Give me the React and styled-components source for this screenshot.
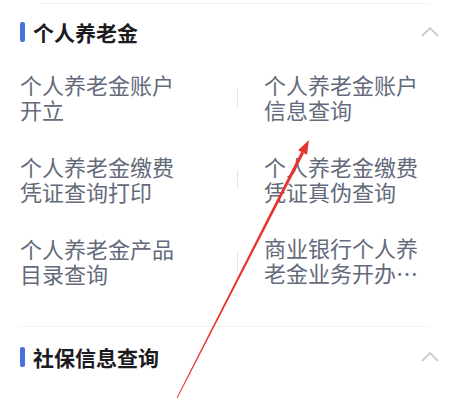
import styled, { createGlobalStyle, css } from "styled-components";

const GlobalStyle = createGlobalStyle`
  body {
    margin: 0;
    background: #ffffff;
    font-family: "Noto Sans CJK SC", "Noto Sans", sans-serif;
  }
`;

const sections = [
  {
    title: "个人养老金",
    items: [
      ["个人养老金账户开立", "个人养老金账户信息查询"],
      ["个人养老金缴费凭证查询打印", "个人养老金缴费凭证真伪查询"],
      ["个人养老金产品目录查询", "商业银行个人养老金业务开办流程查询"],
    ],
  },
];

const App = () => {
  return (
    <Page>
      <GlobalStyle />
      <Separator />
      {sections.map((section) => (
        <Section key={section.title}>
          <Header>
            <Title>
              <Bar />
              {section.title}
            </Title>
            <Chevron />
          </Header>
          <Rows>
            {section.items.map(([left, right]) => (
              <Row key={left}>
                <Cell>{left}</Cell>
                <Divider />
                <Cell $right $clamp={right.length > 14}>{right}</Cell>
              </Row>
            ))}
          </Rows>
        </Section>
      ))}
      <Separator $gap />
      <Header $second>
        <Title>
          <Bar />
          社保信息查询
        </Title>
        <Chevron />
      </Header>
      <Arrow />
    </Page>
  );
};

export default App;

const Chevron = () => (
  <ChevronSvg width="20" height="12" viewBox="0 0 20 12">
    <polyline points="2,10 10,2 18,10" fill="none" stroke="#cbcbcb" strokeWidth="1.8" />
  </ChevronSvg>
);

// red annotation arrow drawn over the page
const Arrow = () => (
  <Overlay width="474" height="401" viewBox="0 0 474 401">
    <polygon
      points="177.4,398.3 304.0,153.2 301.2,151.8 176.6,397.7"
      fill="#e8322b"
    />
    <polygon points="309,140 307.0,154.8 298.1,150.2" fill="#e8322b" />
  </Overlay>
);

const Page = styled.div`
  position: relative;
  width: 474px;
  height: 401px;
  overflow: hidden;
  padding-top: 3px;
  box-sizing: border-box;
`;

const Separator = styled.div`
  height: 1px;
  background: #f3f3f5;
  margin: ${(p) => (p.$gap ? "40px 44px 0 20px" : "0 44px 0 40px")};
`;

const Section = styled.section`
  display: flex;
  flex-direction: column;
`;

const Header = styled.div`
  height: 40px;
  margin: ${(p) => (p.$second ? "10px 34px 0 20px" : "8px 34px 0 20px")};
  display: flex;
  align-items: center;
  justify-content: space-between;
`;

const Title = styled.div`
  display: flex;
  align-items: center;
  gap: 8px;
  font-size: 21px;
  font-weight: 600;
  color: #1c1c1e;
  line-height: 1;
`;

const Bar = styled.span`
  width: 5px;
  height: 20px;
  border-radius: 2px;
  background: #4b6fdc;
`;

const ChevronSvg = styled.svg`
  display: block;
`;

const Rows = styled.div`
  margin: 20px 0 0 20px;
  display: flex;
  flex-direction: column;
  gap: 32px;
`;

const Row = styled.div`
  display: grid;
  grid-template-columns: 217px 1px 1fr;
  align-items: center;
  height: 50px;
`;

const Cell = styled.div`
  width: 160px;
  padding-left: ${(p) => (p.$right ? "26px" : "0")};
  font-size: 22px;
  line-height: 25px;
  color: #636a7b;
  ${(p) =>
    p.$clamp &&
    css`
      display: -webkit-box;
      -webkit-line-clamp: 2;
      -webkit-box-orient: vertical;
      overflow: hidden;
      padding-bottom: 2px;
    `}
`;

const Divider = styled.span`
  width: 1px;
  height: 19px;
  background: #e2e3e6;
`;

const Overlay = styled.svg`
  position: absolute;
  left: 0;
  top: 0;
  pointer-events: none;
`;
